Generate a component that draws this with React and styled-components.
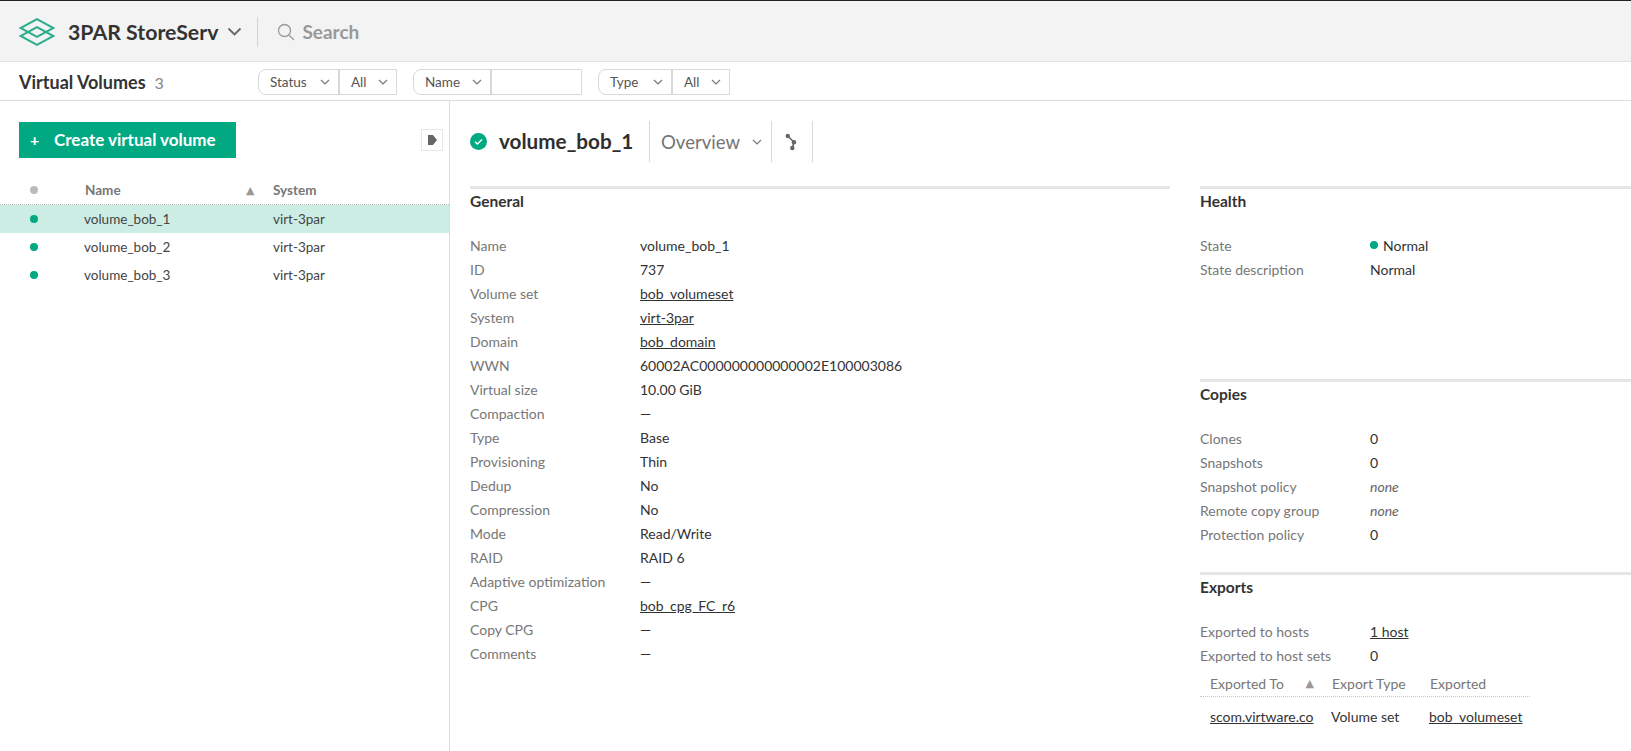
import React from 'react';
import styled, { createGlobalStyle } from 'styled-components';

const Global = createGlobalStyle`
  html, body { margin: 0; padding: 0; background: #fff; }
  body { font-family: "Lato", "Liberation Sans", sans-serif; color: #333; overflow: hidden; }
  * { box-sizing: border-box; }
`;

const Page = styled.div`
  width: 1631px; height: 751px; display: flex; flex-direction: column; overflow: hidden;
`;
const TopBar = styled.header`
  height: 62px; flex: none; display: flex; align-items: center; padding: 1px 0 0 19px;
  background: #f3f3f3; border-top: 1px solid #222; border-bottom: 1px solid #e2e2e2;
`;
const Brand = styled.span`
  font-size: 21.3px; font-weight: 700; color: #333; margin: 0 9px 0 13px;
`;
const TopDivider = styled.span`
  width: 1px; height: 30px; background: #d4d4d4; margin: 0 19px 0 15px;
`;
const SearchText = styled.span`
  font-size: 19px; font-weight: 700; color: #999; margin-left: 7px;
`;
const SubBar = styled.div`
  height: 39px; flex: none; display: flex; align-items: center; padding: 1px 0 0 19px;
  border-bottom: 1px solid #dcdcdc;
`;
const SubTitle = styled.span`
  font-size: 18px; font-weight: 700; color: #333; width: 239px; white-space: nowrap;
  & > small { font-size: 16px; font-weight: 400; color: #888; margin-left: 9px; }
`;
const FilterGroup = styled.div`
  display: flex; height: 26px; margin-right: ${p => p.$gap}px;
  border: 1px solid #d8d8d8; border-radius: 8px 0 0 8px; background: #fff;
`;
const FilterCell = styled.div`
  display: flex; align-items: center; justify-content: space-between;
  width: ${p => p.$w}px; padding: 0 8px 0 11px; font-size: 13.5px; color: #555;
  & + & { border-left: 2px solid #d8d8d8; }
`;
const Body = styled.div`
  flex: 1; display: flex; min-height: 0;
`;
const Sidebar = styled.aside`
  width: 450px; flex: none; border-right: 1px solid #dcdcdc; padding-top: 21px;
`;
const SideTop = styled.div`
  display: flex; align-items: center; justify-content: space-between;
  padding: 0 6px 0 19px; height: 36px;
`;
const CreateButton = styled.button`
  width: 217px; height: 36px; border: 0; background: #01a982; color: #fff; padding: 0 0 2px 11px;
  font: 700 17px "Lato", sans-serif; display: flex; align-items: center; text-align: left;
  & > span { width: 24px; font-size: 16px; }
`;
const CollapseBox = styled.div`
  width: 22px; height: 22px; border: 1px solid #e8e8e8; display: flex; align-items: center; justify-content: center;
`;
const ListGrid = `display: grid; grid-template-columns: 84px 162px 27px 1fr; align-items: center;`;
const ListHead = styled.div`
  ${ListGrid} height: 29px; margin-top: 18px; border-bottom: 1px dotted #bcbcbc;
  font-size: 13.5px; font-weight: 700; color: #777;
  & > span:nth-child(2) { padding-left: 1px; }
`;
const ListRow = styled.div`
  ${ListGrid} height: 28px; font-size: 13.5px; color: #444; background: ${p => p.$on ? '#ccede4' : 'transparent'};
`;
const DotCell = styled.span`
  display: flex; padding-left: 30px;
`;
const Dot = styled.i`
  display: inline-block; width: 8px; height: 8px; border-radius: 50%;
  background: ${p => p.$c || '#01a982'};
`;
const SortMark = styled.span`
  font-size: 11px; color: #999; font-family: "DejaVu Sans", sans-serif;
`;
const Main = styled.main`
  flex: 1; min-width: 0; padding: 0 0 0 20px; overflow: hidden;
`;
const DetailHead = styled.div`
  display: flex; align-items: center; height: 41px; margin-top: 20px;
`;
const CheckWrap = styled.span`
  display: flex; margin-right: 12px;
`;
const DetailName = styled.h1`
  margin: 0; padding-bottom: 2px; font-size: 20.7px; font-weight: 700; color: #2f2f2f; width: 150px; white-space: nowrap;
`;
const HeadDivider = styled.span`
  width: 1px; height: 41px; background: #d9d9d9;
`;
const ViewSelect = styled.div`
  display: flex; align-items: center; width: 121px; padding-left: 11px; font-size: 18.6px; color: #757575;
  & > svg { margin-left: 12px; }
`;
const ShareCell = styled.div`
  width: 40px; display: flex; justify-content: center; padding-right: 3px;
`;
const Columns = styled.div`
  display: flex; margin-top: 24px;
`;
const LeftCol = styled.div`
  width: 700px; flex: none;
`;
const RightCol = styled.div`
  flex: 1; margin-left: 30px; margin-right: -10px;
`;
const Section = styled.section`
  border-top: 3px solid #e6e6e6; height: ${p => p.$h ? p.$h + 'px' : 'auto'};
`;
const SectionTitle = styled.h2`
  margin: 0; font-size: 15.5px; font-weight: 700; color: #333; padding-top: 2px; height: 44px; line-height: 20px;
`;
const Row = styled.div`
  display: flex; height: 24px; align-items: center; font-size: 14px; color: #333;
`;
const Label = styled.span`
  width: 170px; flex: none; color: #777;
`;
const Value = styled.span`
  font-style: ${p => p.$em ? 'italic' : 'normal'}; color: ${p => p.$em ? '#666' : '#333'};
  display: inline-flex; align-items: center; gap: 5px;
`;
const Linked = styled.a`
  color: #333; text-decoration: underline;
`;
const ExportTable = styled.div`
  font-size: 14px; margin-top: 4px;
`;
const ExportHead = styled.div`
  display: grid; grid-template-columns: 122px 98px auto; width: 330px; height: 26px; align-items: center;
  padding-left: 10px; color: #777; border-bottom: 1px dotted #c8c8c8;
`;
const ExportRow = styled.div`
  display: grid; grid-template-columns: 121px 98px auto; padding-left: 10px; margin-top: 9px; height: 20px; align-items: center; color: #333;
`;
const HeadWithSort = styled.span`
  display: flex; align-items: center; justify-content: space-between; padding-right: 18px;
`;

const Chevron = ({ size = 10, color = '#777', sw = 1.2 }) => (
  <svg width={size} height={size * 0.6} viewBox="0 0 10 6" fill="none" stroke={color} strokeWidth={sw}>
    <path d="M1 1l4 4 4-4" />
  </svg>
);

const Logo = () => (
  <svg width="36" height="28" viewBox="0 0 36 28" fill="none" stroke="#2bae8b" strokeWidth="2">
    <path d="M18 1.2L34.5 10 18 18.8 1.5 10z" />
    <path d="M18 9.2L34.5 18 18 26.8 1.5 18z" />
  </svg>
);

const general = [
  ['Name', 'volume_bob_1'], ['ID', '737'], ['Volume set', 'bob_volumeset', 1], ['System', 'virt-3par', 1],
  ['Domain', 'bob_domain', 1], ['WWN', '60002AC000000000000002E100003086'], ['Virtual size', '10.00 GiB'],
  ['Compaction', '—'], ['Type', 'Base'], ['Provisioning', 'Thin'], ['Dedup', 'No'], ['Compression', 'No'],
  ['Mode', 'Read/Write'], ['RAID', 'RAID 6'], ['Adaptive optimization', '—'], ['CPG', 'bob_cpg_FC_r6', 1],
  ['Copy CPG', '—'], ['Comments', '—'],
];
const copies = [
  ['Clones', '0'], ['Snapshots', '0'], ['Snapshot policy', 'none', 0, 1],
  ['Remote copy group', 'none', 0, 1], ['Protection policy', '0'],
];

const InfoRow = ({ l, v, link, em }) => (
  <Row>
    <Label>{l}</Label>
    <Value $em={em}>{link ? <Linked>{v}</Linked> : v}</Value>
  </Row>
);

const Filter = ({ cells, gap }) => (
  <FilterGroup $gap={gap}>
    {cells.map(([t, w, noChevron], i) => (
      <FilterCell key={i} $w={w}>{t}{!noChevron && <Chevron />}</FilterCell>
    ))}
  </FilterGroup>
);

export default function App() {
  return (
    <Page>
      <Global />
      <TopBar>
        <Logo />
        <Brand>3PAR StoreServ</Brand>
        <Chevron size={15} color="#666" />
        <TopDivider />
        <svg width="18" height="18" viewBox="0 0 18 18" fill="none" stroke="#999" strokeWidth="1.3">
          <circle cx="7.5" cy="7.5" r="6" /><path d="M12 12l5 5" />
        </svg>
        <SearchText>Search</SearchText>
      </TopBar>
      <SubBar>
        <SubTitle>Virtual Volumes<small>3</small></SubTitle>
        <Filter gap={16} cells={[['Status', 79], ['All', 58]]} />
        <Filter gap={16} cells={[['Name', 76], ['', 91, 1]]} />
        <Filter gap={0} cells={[['Type', 72], ['All', 58]]} />
      </SubBar>
      <Body>
        <Sidebar>
          <SideTop>
            <CreateButton><span>+</span>Create virtual volume</CreateButton>
            <CollapseBox>
              <svg width="11" height="12" viewBox="0 0 11 12"><path d="M1 1h5l4 5-4 5H1z" fill="#666" /></svg>
            </CollapseBox>
          </SideTop>
          <ListHead>
            <DotCell><Dot $c="#bbb" /></DotCell><span>Name</span><SortMark>▲</SortMark><span>System</span>
          </ListHead>
          {[1, 2, 3].map(n => (
            <ListRow key={n} $on={n === 1}>
              <DotCell><Dot /></DotCell><span>volume_bob_{n}</span><span /><span>virt-3par</span>
            </ListRow>
          ))}
        </Sidebar>
        <Main>
          <DetailHead>
            <CheckWrap>
              <svg width="17" height="17" viewBox="0 0 17 17">
                <circle cx="8.5" cy="8.5" r="8.5" fill="#01a982" />
                <path d="M5 8.7l2.4 2.3L12 6.5" fill="none" stroke="#fff" strokeWidth="1.4" />
              </svg>
            </CheckWrap>
            <DetailName>volume_bob_1</DetailName>
            <HeadDivider />
            <ViewSelect>Overview<Chevron /></ViewSelect>
            <HeadDivider />
            <ShareCell>
              <svg width="12" height="18" viewBox="0 0 12 18" fill="none" stroke="#666" strokeWidth="1.6">
                <path d="M2.8 3L9 9.3 7.3 15" />
                <circle cx="2.8" cy="3" r="2.2" fill="#666" stroke="none" />
                <circle cx="9" cy="9.3" r="2.2" fill="#666" stroke="none" />
                <circle cx="7.3" cy="15" r="2.2" fill="#666" stroke="none" />
              </svg>
            </ShareCell>
            <HeadDivider />
          </DetailHead>
          <Columns>
            <LeftCol>
              <Section>
                <SectionTitle>General</SectionTitle>
                {general.map(([l, v, link]) => <InfoRow key={l} l={l} v={v} link={link} />)}
              </Section>
            </LeftCol>
            <RightCol>
              <Section $h={193}>
                <SectionTitle>Health</SectionTitle>
                <Row><Label>State</Label><Value><Dot />Normal</Value></Row>
                <InfoRow l="State description" v="Normal" />
              </Section>
              <Section $h={193}>
                <SectionTitle>Copies</SectionTitle>
                {copies.map(([l, v, link, em]) => <InfoRow key={l} l={l} v={v} link={link} em={em} />)}
              </Section>
              <Section>
                <SectionTitle>Exports</SectionTitle>
                <Row><Label>Exported to hosts</Label><Value><Linked>1 host</Linked></Value></Row>
                <InfoRow l="Exported to host sets" v="0" />
                <ExportTable>
                  <ExportHead>
                    <HeadWithSort>Exported To<SortMark>▲</SortMark></HeadWithSort>
                    <span>Export Type</span><span>Exported</span>
                  </ExportHead>
                  <ExportRow>
                    <Linked>scom.virtware.co</Linked><span>Volume set</span><Linked>bob_volumeset</Linked>
                  </ExportRow>
                </ExportTable>
              </Section>
            </RightCol>
          </Columns>
        </Main>
      </Body>
    </Page>
  );
}
